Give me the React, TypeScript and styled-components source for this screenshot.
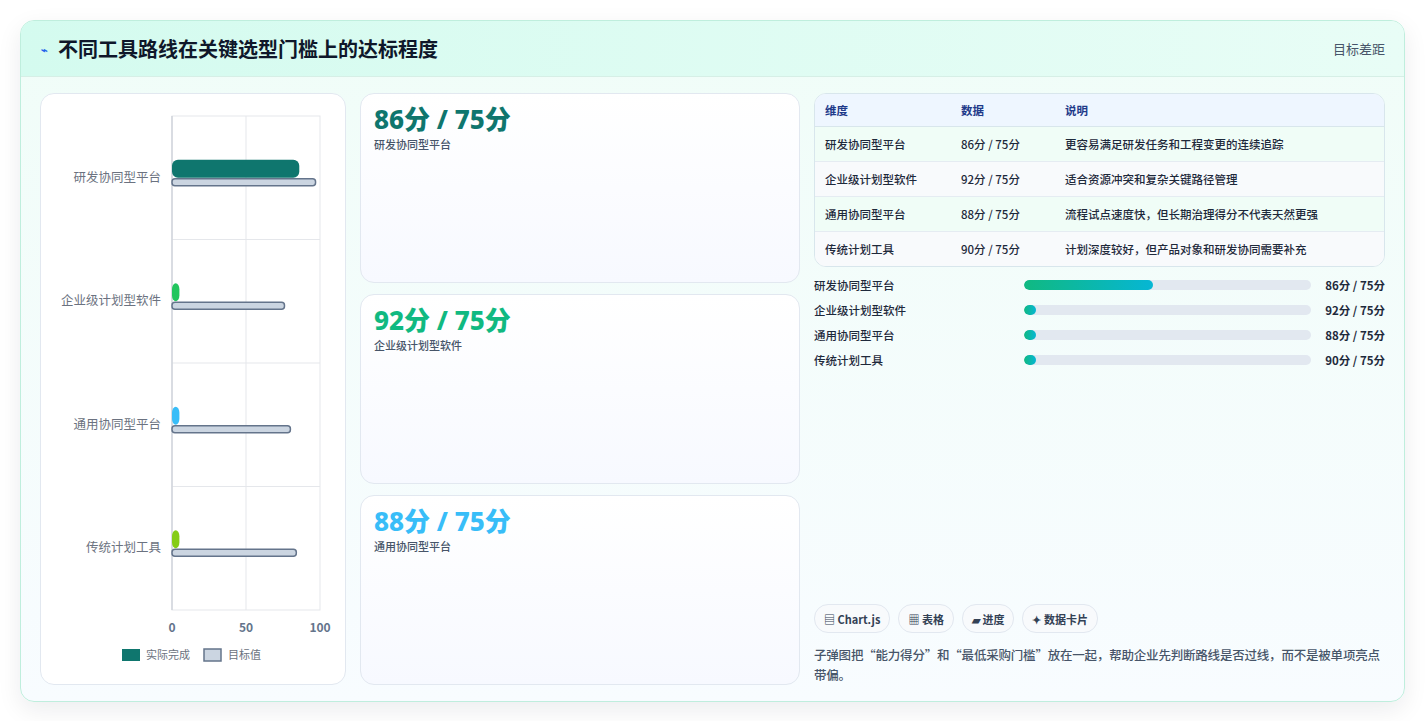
import React from "react";
import styled, { createGlobalStyle } from "styled-components";

const G = createGlobalStyle`
  body { margin: 0; background: #fff; font-family: "Noto Sans CJK SC", "Noto Sans", sans-serif; }
`;
const Page = styled.div` padding: 20px 21px 19px 20px; height: 721px; box-sizing: border-box; `;
const Card = styled.div`
  height: 100%; box-sizing: border-box; border: 1px solid #bfeedd; border-radius: 14px;
  background: linear-gradient(180deg, #f0fdf8, #f8fcff); overflow: hidden;
  box-shadow: 0 8px 24px rgba(15, 23, 42, 0.08); display: flex; flex-direction: column;
`;
const Header = styled.div`
  height: 55px; flex: none; display: flex; align-items: center; justify-content: space-between;
  padding: 0 19px 0 20px; background: linear-gradient(90deg, #d4fbef, #e8fdf6);
  border-bottom: 1px solid #d6efe6;
`;
const Title = styled.h1` margin: 0; font-size: 20px; font-weight: 700; color: #0f172a; display: flex; align-items: center; gap: 10px; `;
const Hint = styled.span` font-size: 13px; color: #475569; `;
const Body = styled.div`
  flex: 1; display: grid; grid-template-columns: 306px 440px 1fr; gap: 14px 14px;
  padding: 16px 19px 18px 19px; min-height: 0;
`;
const Panel = styled.div` background: #fff; border: 1px solid #e2e8f0; border-radius: 14px; `;
const ChartPanel = styled(Panel)` padding: 0; `;
const Mid = styled.div` display: grid; grid-template-rows: repeat(3, 1fr); gap: 11px; `;
const Stat = styled(Panel)`
  background: linear-gradient(180deg, #fff, #f7f9ff); padding: 9px 13px;
`;
const StatNum = styled.div<{ c: string }>` font-size: 26px; font-weight: 800; color: ${p => p.c}; line-height: 32px; font-family: "Noto Sans", "Noto Sans CJK SC", sans-serif; `;
const StatLabel = styled.div` font-size: 11px; color: #475569; font-weight: 500; margin-top: 1px; `;
const Right = styled.div` display: flex; flex-direction: column; `;
const Table = styled.table`
  width: 100%; border-collapse: separate; border-spacing: 0; border: 1px solid #d8e6ec; border-radius: 12px;
  overflow: hidden; font-size: 11.5px; color: #1e293b; background: #fff; font-weight: 500;
  th { background: #eef6ff; color: #1e3a8a; text-align: left; font-weight: 700; height: 32px; border-bottom: 1px solid #d8e6ec; }
  td { height: 34px; border-bottom: 1px solid #e5ecf2; }
  tr:last-child td { border-bottom: none; }
  tbody tr:nth-child(odd) td { background: #f0fdf7; }
  tbody tr:nth-child(even) td { background: #f8fafc; }
  th, td { padding: 0 10px; }
`;
const Bars = styled.div` display: flex; flex-direction: column; gap: 8px; margin-top: 9px; `;
const BarRow = styled.div` display: grid; grid-template-columns: 210px 1fr 74px; align-items: center; height: 17px; font-size: 11.5px; color: #1e293b; font-weight: 500; `;
const Track = styled.div` height: 10px; border-radius: 5px; background: #e2e8f0; overflow: hidden; `;
const Fill = styled.div` height: 100%; border-radius: 5px; background: linear-gradient(90deg, #10b981, #06b6d4); min-width: 12px; `;
const Val = styled.span` text-align: right; font-weight: 700; `;
const Spacer = styled.div` flex: 1; `;
const Chips = styled.div` display: flex; gap: 8px; `;
const Chip = styled.span`
  font-size: 11px; font-weight: 700; color: #334155; padding: 0 9px; height: 27px; display: inline-flex; align-items: center;
  border: 1px solid #e2e8f0; border-radius: 14px; background: #f8fafc;
`;
const Note = styled.p` margin: 12px 0 0; font-size: 12.5px; line-height: 20px; color: #475569; font-weight: 500; letter-spacing: -0.2px; `;

const cats = [
  { n: "研发协同型平台", a: 86, t: 97, c: "#0f766e" },
  { n: "企业级计划型软件", a: 5, t: 76, c: "#22c55e" },
  { n: "通用协同型平台", a: 5, t: 80, c: "#38bdf8" },
  { n: "传统计划工具", a: 5, t: 84, c: "#84cc16" },
];

function Chart() {
  const x0 = 131, w = 148, top = 22, band = 123.5;
  const X = (v: number) => x0 + (v / 100) * w;
  return (
    <svg width="304" height="590" style={{ display: "block" }}>
      <rect x={x0} y={top} width={w} height={494} fill="none" stroke="#e5e7eb" />
      {[50].map(v => <line key={v} x1={X(v)} x2={X(v)} y1={top} y2={516} stroke="#e5e7eb" />)}
      {[1, 2, 3].map(i => <line key={i} x1={x0} x2={x0 + w} y1={top + band * i} y2={top + band * i} stroke="#e5e7eb" />)}
      <line x1={x0} x2={x0} y1={top} y2={516} stroke="#d1d5db" strokeWidth="1.5" />
      {cats.map((c, i) => {
        const cy = top + band * i + band / 2;
        return (
          <g key={c.n}>
            <text x={120} y={cy + 4} textAnchor="end" fontSize="12.5" fill="#6b7280">{c.n}</text>
            <rect x={x0} y={cy - 18} width={X(c.a) - x0} height={18} rx={6} fill={c.c} />
            <rect x={x0} y={cy + 1} width={X(c.t) - x0} height={7} rx={3} fill="#cbd5e1" stroke="#64748b" strokeWidth="1.5" />
          </g>
        );
      })}
      {[0, 50, 100].map(v => <text key={v} x={X(v)} y={538} textAnchor="middle" fontSize="12" fontWeight="700" fill="#64748b">{v}</text>)}
      <rect x={81} y={555} width={18} height={12} fill="#0f766e" />
      <text x={105} y={565} fontSize="11" fill="#6b7280">实际完成</text>
      <rect x={163} y={555} width={17} height={12} fill="#cbd5e1" stroke="#64748b" strokeWidth="1.5" />
      <text x={187} y={565} fontSize="11" fill="#6b7280">目标值</text>
    </svg>
  );
}

export default function App() {
  return (
    <Page>
      <G />
      <Card>
        <Header>
          <Title><span style={{ fontSize: 11, color: "#2563eb" }}>⌁</span>不同工具路线在关键选型门槛上的达标程度</Title>
          <Hint>目标差距</Hint>
        </Header>
        <Body>
          <ChartPanel><Chart /></ChartPanel>
          <Mid>
            <Stat><StatNum c="#0f766e">86分 / 75分</StatNum><StatLabel>研发协同型平台</StatLabel></Stat>
            <Stat><StatNum c="#10b981">92分 / 75分</StatNum><StatLabel>企业级计划型软件</StatLabel></Stat>
            <Stat><StatNum c="#38bdf8">88分 / 75分</StatNum><StatLabel>通用协同型平台</StatLabel></Stat>
          </Mid>
          <Right>
            <Table>
              <thead><tr><th style={{ width: 116 }}>维度</th><th style={{ width: 84 }}>数据</th><th>说明</th></tr></thead>
              <tbody>
                <tr><td>研发协同型平台</td><td>86分 / 75分</td><td>更容易满足研发任务和工程变更的连续追踪</td></tr>
                <tr><td>企业级计划型软件</td><td>92分 / 75分</td><td>适合资源冲突和复杂关键路径管理</td></tr>
                <tr><td>通用协同型平台</td><td>88分 / 75分</td><td>流程试点速度快，但长期治理得分不代表天然更强</td></tr>
                <tr><td>传统计划工具</td><td>90分 / 75分</td><td>计划深度较好，但产品对象和研发协同需要补充</td></tr>
              </tbody>
            </Table>
            <Bars>
              {[["研发协同型平台", 45, "86分 / 75分"], ["企业级计划型软件", 0, "92分 / 75分"], ["通用协同型平台", 0, "88分 / 75分"], ["传统计划工具", 0, "90分 / 75分"]].map(([n, p, v]) => (
                <BarRow key={n as string}><span>{n}</span><Track><Fill style={{ width: `${p}%` }} /></Track><Val>{v}</Val></BarRow>
              ))}
            </Bars>
            <Spacer />
            <Chips><Chip>▤ Chart.js</Chip><Chip>▦ 表格</Chip><Chip>▰ 进度</Chip><Chip>✦ 数据卡片</Chip></Chips>
            <Note>子弹图把“能力得分”和“最低采购门槛”放在一起，帮助企业先判断路线是否过线，而不是被单项亮点带偏。</Note>
          </Right>
        </Body>
      </Card>
    </Page>
  );
}
